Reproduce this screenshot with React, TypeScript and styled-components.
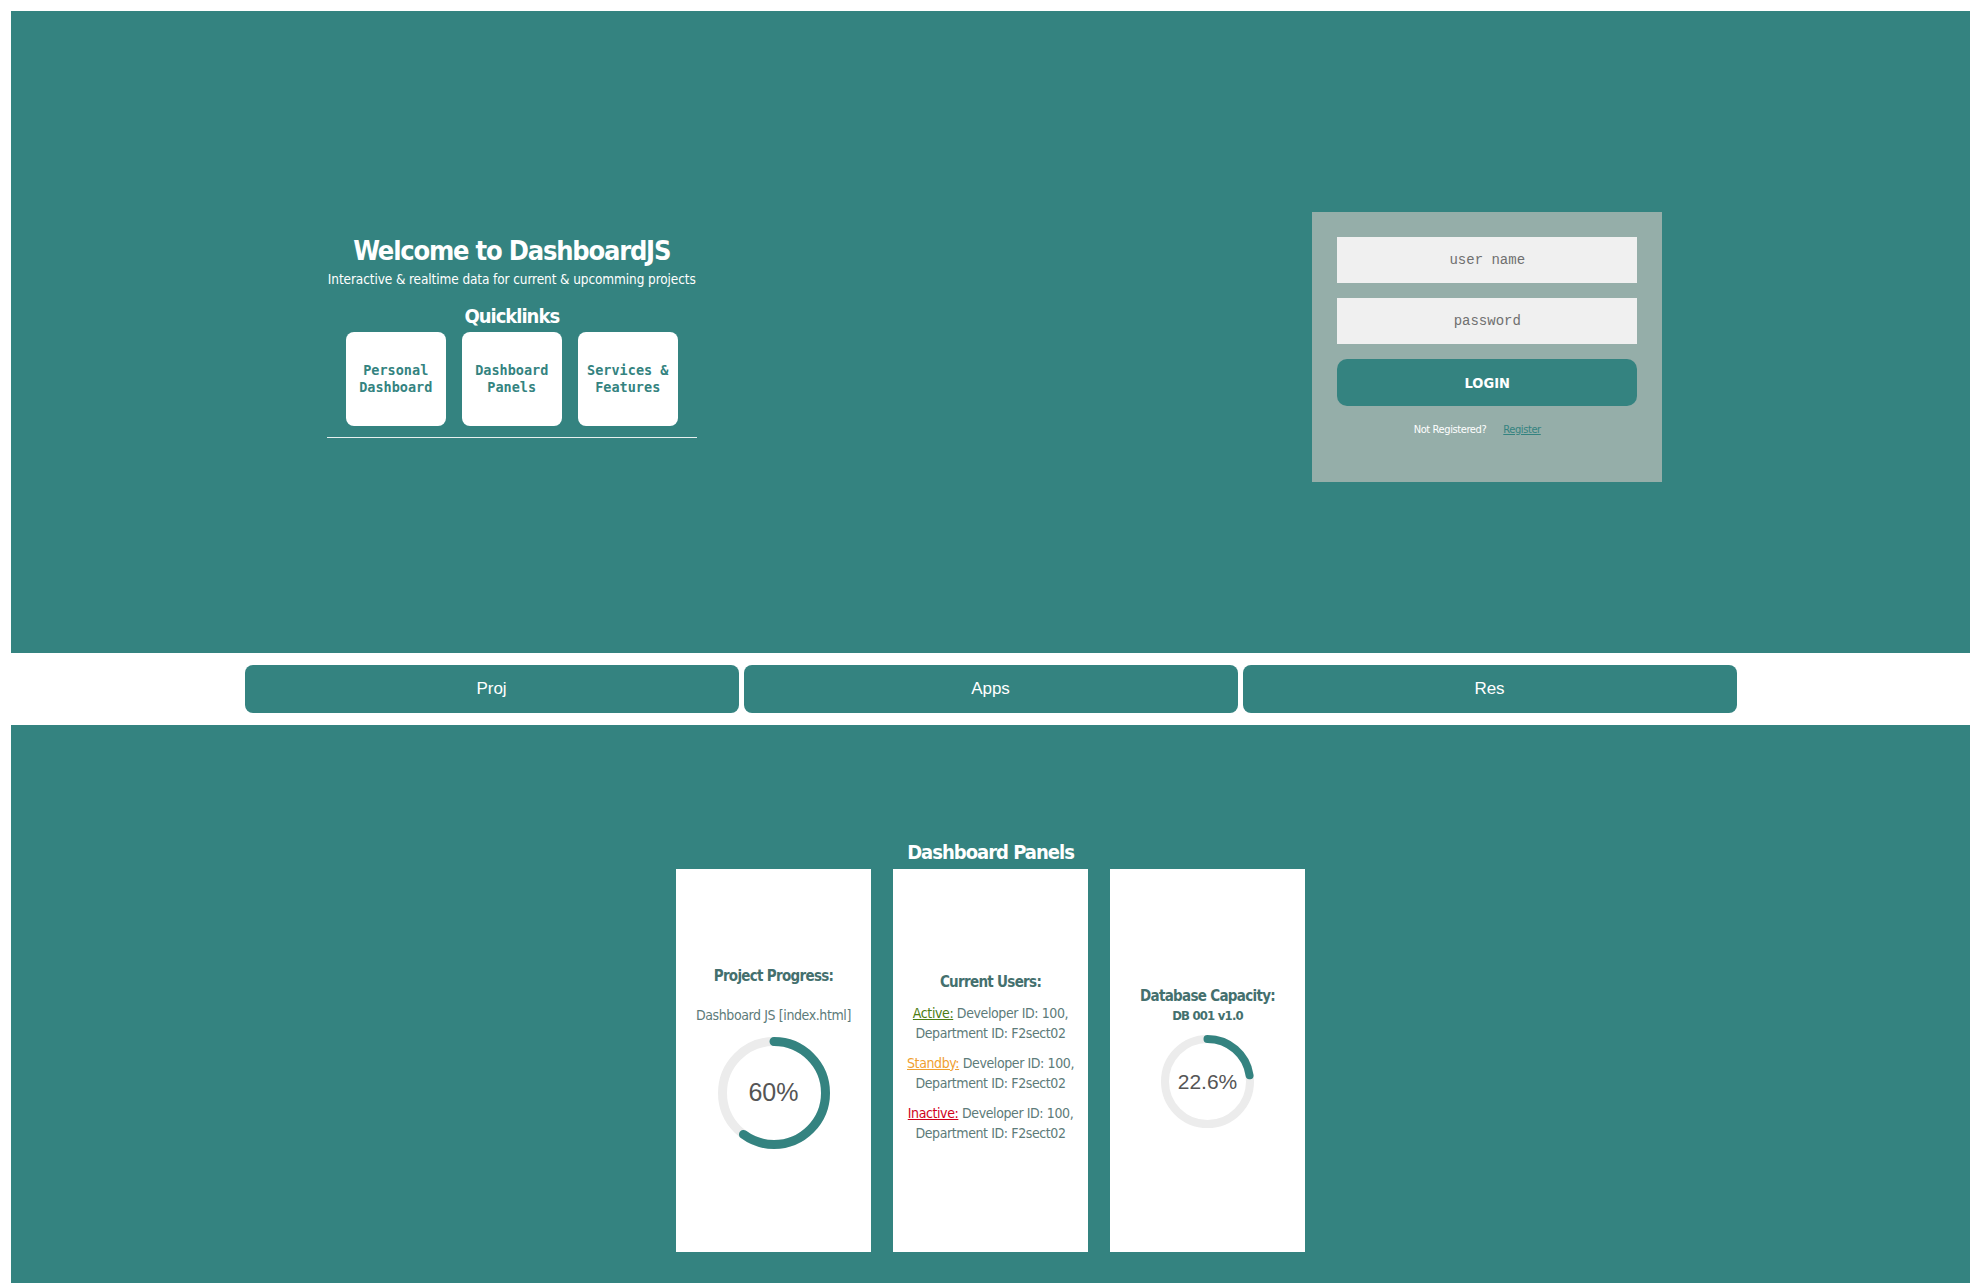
import React from 'react';
import styled, { createGlobalStyle } from 'styled-components';

const teal = '#348380';
const soft = '"DejaVu Sans Condensed", "DejaVu Sans", sans-serif';

const GlobalStyle = createGlobalStyle`
    body {
        margin: 11px 13px 0 11px;
        background: #ffffff;
        font-family: ${soft};
    }
`

type Ring = { size: number; stroke: number; value: number; fontSize: number };

const Donut = ({ size, stroke, value, fontSize }: Ring) => {
    const r = (size - stroke) / 2;
    const c = 2 * Math.PI * r;
    return (
        <StlDonut style={{ width: size, height: size }}>
            <svg width={size} height={size} viewBox={`0 0 ${size} ${size}`}>
                <circle cx={size / 2} cy={size / 2} r={r} fill="none" stroke="#ececec" strokeWidth={stroke} />
                <circle
                    cx={size / 2}
                    cy={size / 2}
                    r={r}
                    fill="none"
                    stroke={teal}
                    strokeWidth={stroke}
                    strokeLinecap="round"
                    strokeDasharray={`${(c * value) / 100} ${c}`}
                    transform={`rotate(-90 ${size / 2} ${size / 2})`}
                />
            </svg>
            <StlDonutLabel style={{ fontSize }}>{value}%</StlDonutLabel>
        </StlDonut>
    );
};

export default function App() {
    return (
        <>
            <GlobalStyle />
            <StlHero>
                <StlIntro>
                    <StlTitle>Welcome to DashboardJS</StlTitle>
                    <StlSub>Interactive &amp; realtime data for current &amp; upcomming projects</StlSub>
                    <StlQuickTitle>Quicklinks</StlQuickTitle>
                    <StlLinks>
                        <StlLinkBox>Personal<br />Dashboard</StlLinkBox>
                        <StlLinkBox>Dashboard<br />Panels</StlLinkBox>
                        <StlLinkBox>Services &amp;<br />Features</StlLinkBox>
                    </StlLinks>
                    <StlRule />
                </StlIntro>
                <StlLogin>
                    <StlInput placeholder="user name" />
                    <StlInput placeholder="password" type="password" />
                    <StlLoginBtn>LOGIN</StlLoginBtn>
                    <StlRegister>
                        <span>Not Registered?</span>
                        <a href="#">Register</a>
                    </StlRegister>
                </StlLogin>
            </StlHero>

            <StlNav>
                <StlNavBtn>Proj</StlNavBtn>
                <StlNavBtn>Apps</StlNavBtn>
                <StlNavBtn>Res</StlNavBtn>
            </StlNav>

            <StlPanels>
                <StlPanelsTitle>Dashboard Panels</StlPanelsTitle>
                <StlCards>
                    <StlCard>
                        <StlCardTitle $gap={18}>Project Progress:</StlCardTitle>
                        <StlCardText $gap={12}>Dashboard JS [index.html]</StlCardText>
                        <Donut size={112} stroke={9} value={60} fontSize={25} />
                    </StlCard>
                    <StlCard>
                        <StlCardTitle $gap={10}>Current Users:</StlCardTitle>
                        <StlCardText $gap={10}>
                            <StlStatus $color="#4b7d12">Active:</StlStatus> Developer ID: 100,<br />Department ID: F2sect02
                        </StlCardText>
                        <StlCardText $gap={10}>
                            <StlStatus $color="#f0a030">Standby:</StlStatus> Developer ID: 100,<br />Department ID: F2sect02
                        </StlCardText>
                        <StlCardText $gap={0}>
                            <StlStatus $color="#d0021b">Inactive:</StlStatus> Developer ID: 100,<br />Department ID: F2sect02
                        </StlCardText>
                    </StlCard>
                    <StlCard>
                        <StlCardTitle $gap={0}>Database Capacity:</StlCardTitle>
                        <StlCardSmall>DB 001 v1.0</StlCardSmall>
                        <Donut size={93} stroke={8} value={22.6} fontSize={21} />
                    </StlCard>
                </StlCards>
            </StlPanels>
        </>
    );
}

const StlHero = styled.section`
    height: 642px;
    background-color: ${teal};
    display: flex;
    align-items: center;
    justify-content: space-around;
`

const StlIntro = styled.div`
    width: 370px;
    margin: 6px 0 0 8px;
    text-align: center;
    color: #ffffff;
`

const StlTitle = styled.h1`
    margin: 0;
    font-size: 27px;
    font-weight: 700;
    letter-spacing: -1.2px;
    line-height: 36px;
`

const StlSub = styled.p`
    margin: 1px 0 0;
    font-size: 13.5px;
    line-height: 18px;
    letter-spacing: -0.1px;
`

const StlQuickTitle = styled.h2`
    margin: 15px 0 3px;
    font-size: 20px;
    font-weight: 700;
    letter-spacing: -1px;
    line-height: 26px;
`

const StlLinks = styled.div`
    display: flex;
    justify-content: center;
    gap: 16px;
`

const StlLinkBox = styled.div`
    width: 100px;
    height: 94px;
    border-radius: 8px;
    background: #ffffff;
    color: ${teal};
    font-family: "DejaVu Sans Mono", "Liberation Mono", monospace;
    font-size: 13.5px;
    font-weight: 700;
    line-height: 17px;
    display: flex;
    align-items: center;
    justify-content: center;
`

const StlRule = styled.div`
    margin-top: 11px;
    border-top: 1px solid #e6f0ef;
`

const StlLogin = styled.form`
    box-sizing: border-box;
    width: 350px;
    height: 270px;
    margin-top: 30px;
    padding: 25px;
    background-color: #95aea9;
    display: flex;
    flex-direction: column;
    gap: 15px;
`

const StlInput = styled.input`
    box-sizing: border-box;
    height: 46px;
    border: none;
    outline: none;
    background: #f0f0f0;
    text-align: center;
    font-family: "Liberation Mono", "Courier New", monospace;
    font-size: 14px;
    &::placeholder {
        color: #6f6f6f;
    }
`

const StlLoginBtn = styled.button`
    height: 47px;
    border: none;
    border-radius: 10px;
    background-color: ${teal};
    color: #ffffff;
    font-family: ${soft};
    font-size: 14.5px;
    font-weight: 700;
`

const StlRegister = styled.p`
    margin: 2px 0 0;
    padding-right: 20px;
    display: flex;
    justify-content: center;
    gap: 17px;
    color: #ffffff;
    font-size: 11px;
    letter-spacing: -0.4px;
    a {
        color: ${teal};
    }
`

const StlNav = styled.nav`
    display: flex;
    justify-content: center;
    gap: 5px;
    padding: 12px 0;
`

const StlNavBtn = styled.button`
    width: 494px;
    height: 48px;
    border: none;
    border-radius: 8px;
    background-color: ${teal};
    color: #ffffff;
    font-family: "Liberation Sans", Arial, sans-serif;
    font-size: 17px;
`

const StlPanels = styled.section`
    background-color: ${teal};
    padding: 110px 0 60px;
    display: flex;
    flex-direction: column;
    align-items: center;
`

const StlPanelsTitle = styled.h2`
    margin: 0;
    color: #ffffff;
    font-size: 20px;
    font-weight: 700;
    letter-spacing: -1px;
    line-height: 34px;
`

const StlCards = styled.div`
    display: flex;
    gap: 22px;
`

const StlCard = styled.div`
    box-sizing: border-box;
    width: 195px;
    height: 383px;
    padding: 0 6px 8px;
    background: #ffffff;
    display: flex;
    flex-direction: column;
    align-items: center;
    justify-content: center;
    text-align: center;
`

const StlCardTitle = styled.h3<{ $gap: number }>`
    margin: 0 0 ${(p) => p.$gap}px;
    color: #44706e;
    font-size: 15px;
    font-weight: 700;
    letter-spacing: -0.7px;
    line-height: 22px;
`

const StlCardText = styled.p<{ $gap: number }>`
    margin: 0 0 ${(p) => p.$gap}px;
    color: #5d7b79;
    font-size: 14px;
    line-height: 20px;
    letter-spacing: -0.4px;
`

const StlCardSmall = styled.p`
    margin: 0 0 10px;
    color: #44706e;
    font-size: 13px;
    font-weight: 700;
    letter-spacing: -0.8px;
    line-height: 18px;
`

const StlStatus = styled.span<{ $color: string }>`
    color: ${(p) => p.$color};
    text-decoration: underline;
`

const StlDonut = styled.div`
    position: relative;
    display: flex;
    align-items: center;
    justify-content: center;
    svg {
        position: absolute;
        inset: 0;
    }
`

const StlDonutLabel = styled.span`
    position: relative;
    color: #555555;
    font-family: "Liberation Sans", Arial, sans-serif;
`
